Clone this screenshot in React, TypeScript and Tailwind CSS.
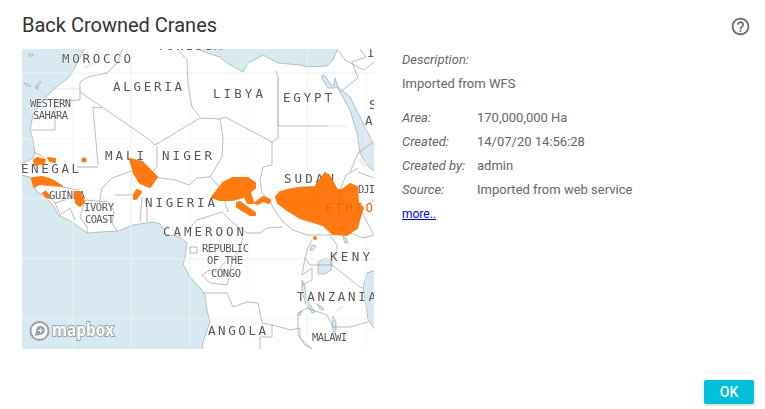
import { MdOutlineHelpOutline } from "react-icons/md";

const water = [
  "21,48 85,48 72,73 68,78 55,88 43,100 33,115 30,130 33,140 35,153 33,158 23,163 21,163 21,175 30,177 37,192 43,195 53,205 58,215 72,222 87,233 100,232 118,231 133,225 153,222 160,224 163,228 165,234 180,237 187,243 185,258 183,264 190,277 200,288 205,295 207,310 210,322 203,342 202,350 21,350",
  "197,48 197,49 207,53 220,57 227,63 243,72 248,63 263,55 278,63 300,65 307,67 327,66 333,60 338,48",
  "322,75 323,80 328,88 334,88 337,87 350,110 357,133 360,153 367,165 375,172 375,147 363,123 350,97 338,87 335,78 334,86 330,84 325,76",
  "375,270 367,273 363,288 366,305 368,320 375,330",
  "318,262 326,258 332,261 331,270 325,274 318,274",
  "302,280 305,286 306,298 310,305 315,312 312,313 306,304 302,292",
  "333,316 336,322 336,330 334,334 332,326",
  "317,304 322,307 324,310 320,309",
  "312,245 316,246 312,251 310,250",
  "343,236 346,238 348,243 345,243",
  "300,312 302,311 300,316 298,314",
];

const islands = ["24,83 27,86 31,86 28,84", "35,87 40,81 41,82 38,87", "29,54 33,54 33,56 29,56", "36,87 38,87 38,89 36,89"];

const borders = [
  "80,90 80,100 55,101 55,130 31,130",
  "80,92 150,140 155,145 200,118 220,119 225,117 272,142 278,138 278,77 276,71",
  "80,90 80,82 88,77 107,73 117,63 120,57 122,49",
  "177,49 187,60 188,85 192,107 200,117",
  "278,126 327,126",
  "220,119 223,137 222,157 210,177 218,185 223,195 228,212",
  "272,142 272,165 263,167 260,180 262,193 270,200 273,208 283,222 293,230 307,235 330,235",
  "93,107 102,108",
  "93,107 98,165",
  "157,146 157,167 152,172",
  "34,152 42,156 45,160",
  "99,203 102,188 112,178 129,172 140,170",
  "115,195 135,195 137,200",
  "142,197 140,222",
  "147,197 147,222",
  "155,177 175,180 189,185 197,178 210,177",
  "45,190 55,203 65,200 79,190 62,187",
  "55,203 60,215 70,208 75,220",
  "85,200 109,202 114,212 112,223 117,231",
  "85,200 80,217 87,227 87,233",
  "222,212 232,222 247,233 260,233 267,228 283,227",
  "190,238 192,225 197,220 222,212",
  "190,247 197,247 197,253 190,253 190,247",
  "243,237 240,248 233,258 230,270 227,285 210,283 202,275 210,270 217,272 225,262",
  "203,293 227,293 233,307 247,302 258,303 262,323 272,325 272,337 260,337 260,349",
  "272,325 280,327 290,330 300,328 300,338 312,349",
  "330,235 350,233 363,238 374,235",
  "330,235 337,245 337,254 330,262 332,265 310,265 305,258 308,248 312,240",
  "332,265 360,287 363,288",
  "298,313 307,308 327,315 333,327 350,327 368,322",
  "305,258 302,275 312,268 312,280 302,285",
  "298,313 298,335 305,345 312,349",
  "350,172 358,153 372,143",
  "340,190 346,175 358,168",
  "358,172 374,178",
  "338,50 345,60 364,70 374,62",
  "360,49 366,57 352,62 358,78 340,92",
  "367,205 374,200",
  "358,205 374,235",
];

const labels: [string, number, number, number, number][] = [
  ["TUNISIA", 157, 222, 50, 12.5],
  ["MOROCCO", 62, 131, 63, 12.5],
  ["ALGERIA", 113, 182, 91, 12.5],
  ["LIBYA", 213, 263, 98, 12.5],
  ["EGYPT", 283, 332, 102, 12.5],
  ["WESTERN", 30, 71, 107, 10.5],
  ["SAHARA", 33, 68, 119, 10.5],
  ["MALI", 105, 144, 160, 12.5],
  ["NIGER", 162, 212, 160, 12.5],
  ["SUDAN", 284, 334, 183, 12.5],
  ["ENEGAL", 21, 79, 173, 12.5],
  ["GUINEA", 49, 85, 199, 10.5],
  ["DJI", 358, 375, 193, 10.5],
  ["IVORY", 84, 114, 211, 10.5],
  ["COAST", 85, 114, 223, 10.5],
  ["NIGERIA", 145, 215, 207, 12.5],
  ["CAMEROON", 163, 244, 236, 12.5],
  ["REPUBLIC", 202, 249, 252, 10.5],
  ["OF THE", 207, 243, 264, 10.5],
  ["CONGO", 211, 241, 277, 10.5],
  ["KENYA", 330, 381, 261, 12.5],
  ["TANZANIA", 297, 376, 301, 12.5],
  ["ANGOLA", 208, 266, 335, 12.5],
  ["MALAWI", 312, 347, 341, 10.5],
  ["S", 369, 377, 109, 12.5],
  ["A", 365, 373, 125, 12.5],
  ["I", 367, 375, 57, 12.5],
];

const orange = [
  "212,197 223,183 233,178 248,178 255,183 255,188 243,197 232,200 220,200",
  "245,193 250,193 252,198 253,203 248,203 245,197",
  "255,203 263,197 270,200 269,203 263,201 258,204",
  "237,203 240,202 255,213 255,215 250,215 237,207",
  "276,197 280,192 297,188 315,187 322,177 325,173 330,177 337,190 342,190 350,184 357,187 358,203 363,208 360,217 357,228 347,235 333,234 323,225 300,218 287,210 278,203",
  "130,159 142,162 157,177 150,187 140,183 134,173",
  "134,195 137,190 141,192 137,198 134,199",
  "75,192 80,192 84,202 80,206 76,203",
  "34,160 37,158 45,160 44,163 35,165",
  "48,158 55,159 55,162 50,161",
  "32,178 42,177 52,180 62,186 50,185 39,184 34,187",
  "43,193 46,192 50,198 46,197",
];

const grid = "M73 49V349M190 49V349M248 49V349M307 49V349M366 49V349M22 139H374M22 199H374M22 319H374";

function MapView() {
  return (
    <div className="h-[300px] w-[352px] shrink-0 overflow-hidden bg-white">
      <svg viewBox="22 49 352 300" width="352" height="300" className="block blur-[0.3px]">
        <rect x="21" y="48" width="354" height="302" fill="#ffffff" />
        {water.map((p, i) => (
          <polygon key={i} points={p} fill="#d9e9f1" stroke="#8faab7" strokeWidth="0.7" />
        ))}
        {islands.map((p, i) => (
          <polygon key={i} points={p} fill="#e8eef1" stroke="#8faab7" strokeWidth="0.7" />
        ))}
        <path d={grid} stroke="#f3f3f2" strokeWidth="0.8" fill="none" />
        <path d="M22 73H374M22 259H374M131 49V349" stroke="#eef1f2" strokeWidth="1" fill="none" />
        <path d="M81 68l10-5 4 1-8 5zM358 160l6 8 2-2-5-8zM339 256l6-3 2 2-6 3zM336 310l7-5 1 2-6 5z" fill="#f1efe6" />
        {borders.map((p, i) => (
          <polyline key={i} points={p} fill="none" stroke="#8e8e8e" strokeWidth="0.6" />
        ))}
        <path d="M77 167H98" stroke="#bdbdbd" strokeWidth="1.2" fill="none" />
        <path d="M278 126V78" stroke="#bdbdbd" strokeWidth="1" fill="none" />
        <path d="M55 89H80M327 126H347" stroke="#a5a5a5" strokeWidth="0.6" strokeDasharray="1 1" fill="none" />
        {labels.map(([t, a, b, y, s]) => (
          <text
            key={t + a}
            x={a}
            y={y}
            textLength={b - a}
            lengthAdjust="spacing"
            fontSize={s}
            fontFamily="'DejaVu Sans Mono', monospace"
            fill="#5a5753"
            stroke="#ffffff"
            strokeWidth="0.8"
            paintOrder="stroke"
          >
            {t}
          </text>
        ))}
        <g fill="#ff7a10" stroke="#ff7a10" strokeWidth="2" strokeLinejoin="round">
          {orange.map((p, i) => (
            <polygon key={i} points={p} />
          ))}
          <circle cx="84" cy="160" r="1.6" />
          <circle cx="315" cy="238" r="1" />
        </g>
        <text x="325" y="212" textLength="48" fontSize="12.5" fontFamily="'DejaVu Sans Mono', monospace" fill="#ec6a0e">
          ETHIO
        </text>
        <path d="M322 177l1 14-7 8 9 12 9 9M280 198l18 9 18-8M338 190l8 20" stroke="#f06f0c" strokeWidth="0.6" fill="none" />
        <path d="M138 170l8 10 6 5" stroke="#e86a0c" strokeWidth="0.6" fill="none" />
        <g>
          <circle cx="39.5" cy="331" r="9" fill="#ffffff" stroke="#98a2a8" strokeWidth="2" />
          <path d="M35 336l1-5.5a4.4 4.4 0 1 1 4.2 4.3z" fill="#98a2a8" />
          <path d="M40.5 328v5M38 330.5h5" stroke="#ffffff" strokeWidth="1" />
          <text
            x="52"
            y="336"
            textLength="62"
            lengthAdjust="spacingAndGlyphs"
            fontSize="17"
            fontWeight="700"
            fontFamily="'Open Sans', sans-serif"
            fill="#ffffff"
            stroke="#98a2a8"
            strokeWidth="2"
            paintOrder="stroke"
          >
            mapbox
          </text>
        </g>
      </svg>
    </div>
  );
}

const rows = [
  ["Area:", "170,000,000 Ha"],
  ["Created:", "14/07/20 14:56:28"],
  ["Created by:", "admin"],
  ["Source:", "Imported from web service"],
];

export default function App() {
  return (
    <div className="flex h-[409px] w-[765px] flex-col overflow-hidden bg-white font-['Roboto',sans-serif] text-[#666666]">
      <header className="flex h-[49px] items-start justify-between pl-[22px] pr-[14px] pt-[11px]">
        <h1 className="text-[20px] leading-[28px] text-[#333333]">Back Crowned Cranes</h1>
        <MdOutlineHelpOutline className="mt-[5px] text-[#666666]" size={21} />
      </header>
      <main className="flex pl-[22px]">
        <MapView />
        <section className="-mt-[1px] pl-[28px] text-[13px] leading-[24px]">
          <p className="italic">Description:</p>
          <p>Imported from WFS</p>
          <dl className="mt-[10px] grid grid-cols-[75px_1fr]">
            {rows.map(([k, v]) => (
              <div key={k} className="contents">
                <dt className="italic">{k}</dt>
                <dd>{v}</dd>
              </div>
            ))}
          </dl>
          <a href="#" className="block text-[12px] text-[#0000ee] underline">
            more..
          </a>
        </section>
      </main>
      <footer className="flex flex-1 items-end justify-end pb-[5px] pr-[11px]">
        <button className="h-[24px] w-[50px] rounded-[2px] bg-[#00bfd8] text-[14px] font-medium text-white shadow-[0_1px_3px_rgba(0,0,0,0.2)]">
          OK
        </button>
      </footer>
    </div>
  );
}
